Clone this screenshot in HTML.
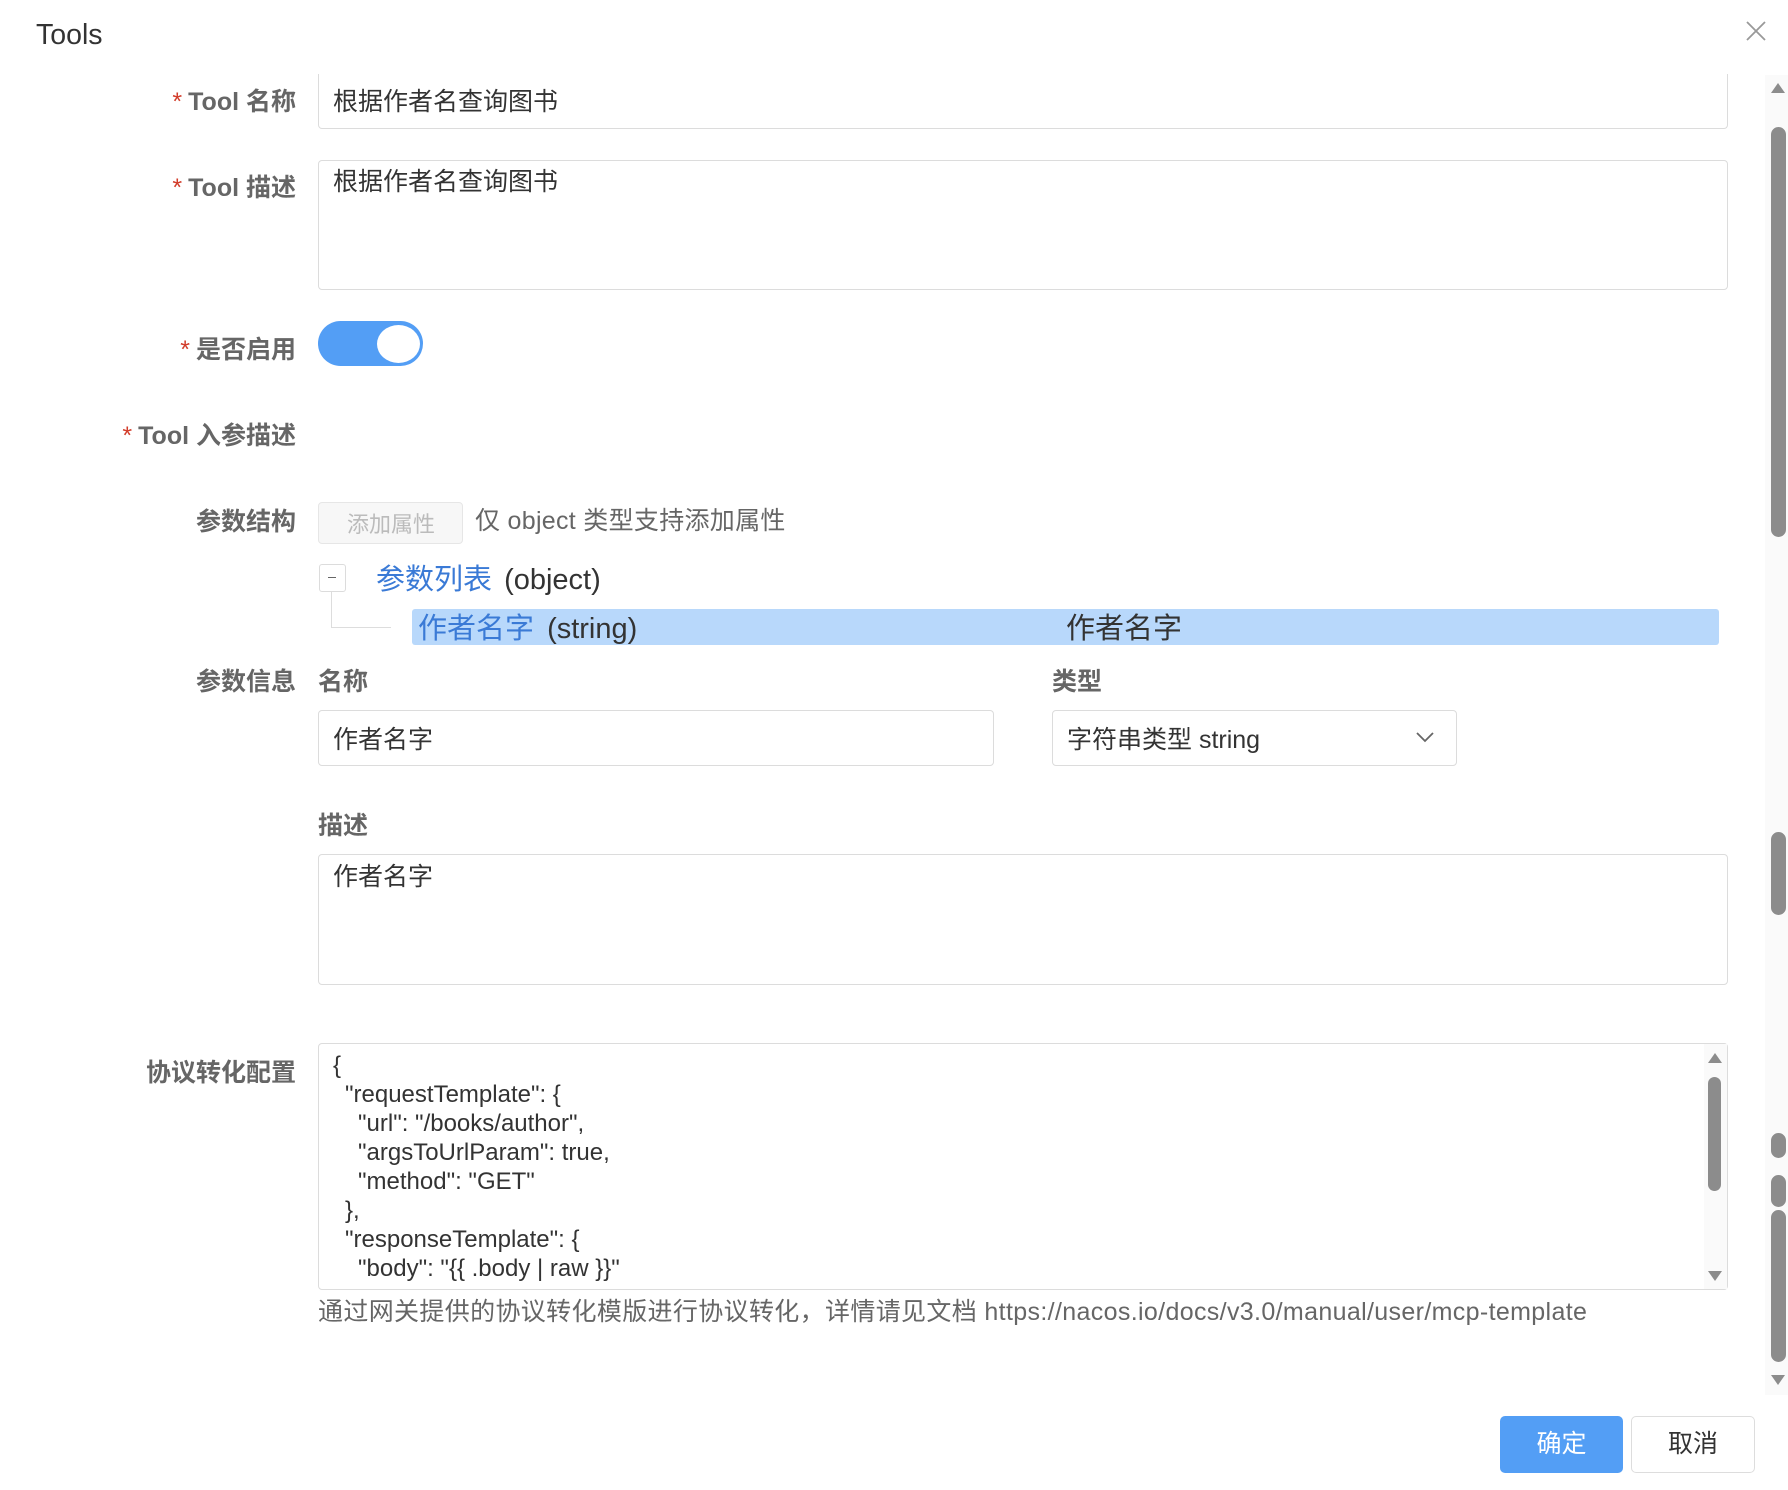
<!DOCTYPE html>
<html><head><meta charset="utf-8"><style>
*{margin:0;padding:0;box-sizing:border-box}
body{width:1788px;height:1490px;background:#fff;font-family:"Liberation Sans","Noto Sans CJK SC",sans-serif;position:relative;overflow:hidden;color:#333}
.a{position:absolute;white-space:nowrap}
.lbl{position:absolute;right:1492px;font-weight:bold;font-size:25px;color:#666;white-space:nowrap}
.lbl b{color:#d23c2a;font-weight:normal;margin-right:6px}
.box{position:absolute;border:1px solid #dcdcdc;border-radius:4px;background:#fff}
.txt{font-size:25px;color:#333}
.sb{position:absolute;background:#8c8c8c;border-radius:8px}
.code div{position:absolute;font-size:24px;color:#333;white-space:nowrap}
</style></head><body>
<div class="lbl" style="top:82px"><b>*</b>Tool 名称</div>
<div class="box" style="left:318px;top:60px;width:1410px;height:69px;border-top:none;border-radius:0 0 4px 4px"></div>
<div class="a txt" style="left:333px;top:82px">根据作者名查询图书</div>
<div style="position:absolute;left:0;top:0;width:1760px;height:74px;background:#fff"></div>
<div class="a" style="left:36px;top:19px;font-size:28.5px;color:#333">Tools</div>
<svg class="a" style="left:1746px;top:21px" width="20" height="20"><path d="M1 1L19 19M19 1L1 19" stroke="#999" stroke-width="1.8"/></svg>

<div class="lbl" style="top:168px"><b>*</b>Tool 描述</div>
<div class="box" style="left:318px;top:160px;width:1410px;height:130px"></div>
<div class="a txt" style="left:333px;top:162px">根据作者名查询图书</div>

<div class="lbl" style="top:330px"><b>*</b>是否启用</div>
<div class="a" style="left:318px;top:321px;width:105px;height:45px;border-radius:23px;background:#539ef5"></div>
<div class="a" style="left:377px;top:325px;width:43px;height:38px;border-radius:50%;background:#fff"></div>

<div class="lbl" style="top:416px"><b>*</b>Tool 入参描述</div>

<div class="lbl" style="top:502px">参数结构</div>
<div class="box" style="left:318px;top:502px;width:145px;height:42px;background:#f7f7f7;border-color:#e6e6e6"></div>
<div class="a" style="left:347px;top:507px;font-size:22px;color:#bbb">添加属性</div>
<div class="a" style="left:475px;top:501px;font-size:25px;color:#666;letter-spacing:0.3px">仅 object 类型支持添加属性</div>

<div class="box" style="left:319px;top:564px;width:27px;height:28px;border-radius:3px"></div>
<div class="a" style="left:328px;top:577px;width:8px;height:1px;background:#666"></div>
<div class="a" style="left:331px;top:592px;width:1px;height:36px;background:#ddd"></div>
<div class="a" style="left:331px;top:627px;width:60px;height:1px;background:#ddd"></div>
<div class="a" style="left:376px;top:556px;font-size:29px;color:#3a7ad6">参数列表 <span style="color:#333;margin-left:4px">(object)</span></div>
<div class="a" style="left:412px;top:609px;width:1307px;height:36px;background:#b8d8fb;border-radius:3px"></div>
<div class="a" style="left:418px;top:605px;font-size:29px;color:#3a7ad6">作者名字 <span style="color:#333;margin-left:5px">(string)</span></div>
<div class="a" style="left:1066px;top:605px;font-size:29px;color:#333">作者名字</div>

<div class="lbl" style="top:662px">参数信息</div>
<div class="a" style="left:318px;top:662px;font-size:25px;font-weight:bold;color:#666">名称</div>
<div class="a" style="left:1052px;top:662px;font-size:25px;font-weight:bold;color:#666">类型</div>
<div class="box" style="left:318px;top:710px;width:676px;height:56px"></div>
<div class="a txt" style="left:333px;top:720px">作者名字</div>
<div class="box" style="left:1052px;top:710px;width:405px;height:56px"></div>
<div class="a" style="left:1067px;top:720px;font-size:25px;color:#333">字符串类型 string</div>
<svg class="a" style="left:1415px;top:730px" width="20" height="14"><path d="M2 3L10 11L18 3" stroke="#666" stroke-width="1.8" fill="none"/></svg>

<div class="a" style="left:318px;top:806px;font-size:25px;font-weight:bold;color:#666">描述</div>
<div class="box" style="left:318px;top:854px;width:1410px;height:131px"></div>
<div class="a txt" style="left:333px;top:857px">作者名字</div>

<div class="lbl" style="top:1053px">协议转化配置</div>
<div class="box" style="left:318px;top:1043px;width:1410px;height:247px;overflow:hidden"></div>
<div class="code">
<div style="left:333px;top:1052px">{</div>
<div style="left:345px;top:1081px">"requestTemplate": {</div>
<div style="left:358px;top:1110px">"url": "/books/author",</div>
<div style="left:358px;top:1139px">"argsToUrlParam": true,</div>
<div style="left:358px;top:1168px">"method": "GET"</div>
<div style="left:345px;top:1197px">},</div>
<div style="left:345px;top:1226px">"responseTemplate": {</div>
<div style="left:358px;top:1255px">"body": "{{ .body | raw }}"</div>
</div>
<div class="a" style="left:1704px;top:1044px;width:23px;height:245px;background:#fafafa"></div>
<svg class="a" style="left:1707px;top:1052px" width="16" height="12"><path d="M8 1L15 11H1Z" fill="#8c8c8c"/></svg>
<div class="sb" style="left:1708px;top:1077px;width:13px;height:114px"></div>
<svg class="a" style="left:1707px;top:1270px" width="16" height="12"><path d="M1 1H15L8 11Z" fill="#8c8c8c"/></svg>
<div class="a" style="left:318px;top:1292px;font-size:25px;color:#666;letter-spacing:0.35px">通过网关提供的协议转化模版进行协议转化，详情请见文档 https://nacos.io/docs/v3.0/manual/user/mcp-template</div>

<div class="a" style="left:1765px;top:75px;width:23px;height:1320px;background:#fafafa"></div>
<svg class="a" style="left:1770px;top:82px" width="16" height="12"><path d="M8 1L15 11H1Z" fill="#8c8c8c"/></svg>
<div class="sb" style="left:1771px;top:127px;width:15px;height:410px"></div>
<div class="sb" style="left:1771px;top:832px;width:15px;height:83px"></div>
<div class="sb" style="left:1771px;top:1133px;width:15px;height:25px"></div>
<div class="sb" style="left:1771px;top:1175px;width:15px;height:32px"></div>
<div class="sb" style="left:1771px;top:1210px;width:15px;height:152px"></div>
<svg class="a" style="left:1770px;top:1374px" width="16" height="12"><path d="M1 1H15L8 11Z" fill="#8c8c8c"/></svg>

<div class="a" style="left:1500px;top:1416px;width:123px;height:57px;background:#539ef5;border-radius:5px;color:#fff;font-size:25px;text-align:center;line-height:57px">确定</div>
<div class="a" style="left:1631px;top:1416px;width:124px;height:57px;border:1px solid #ddd;border-radius:5px;color:#333;font-size:25px;text-align:center;line-height:55px">取消</div>
</body></html>
